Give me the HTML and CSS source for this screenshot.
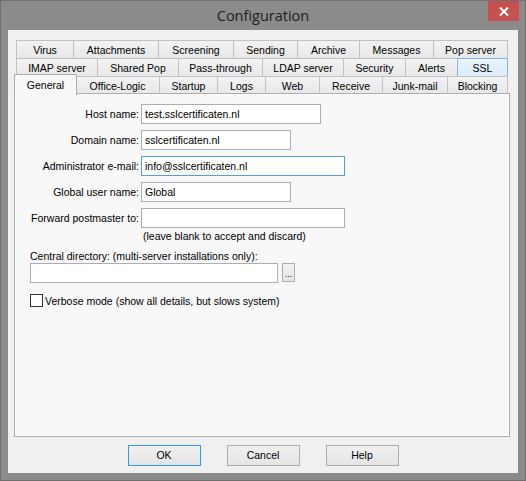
FILE: index.html
```html
<!DOCTYPE html>
<html>
<head>
<meta charset="utf-8">
<link rel="stylesheet" href="styles.css">
</head>
<body>
<div class="window">
  <div class="titlebar">
    <div class="title">Configuration</div>
    <div class="close">
      <svg width="10" height="9" viewBox="0 0 10 9"><path d="M1 0.5 L9 8.5 M9 0.5 L1 8.5" stroke="#fff" stroke-width="2"/></svg>
    </div>
  </div>
  <div class="client">
    <div class="tabs">
      <div class="tabrow row1">
        <div class="tab">Virus</div>
        <div class="tab">Attachments</div>
        <div class="tab">Screening</div>
        <div class="tab">Sending</div>
        <div class="tab">Archive</div>
        <div class="tab">Messages</div>
        <div class="tab">Pop server</div>
      </div>
      <div class="tabrow row2">
        <div class="tab">IMAP server</div>
        <div class="tab">Shared Pop</div>
        <div class="tab">Pass-through</div>
        <div class="tab">LDAP server</div>
        <div class="tab">Security</div>
        <div class="tab">Alerts</div>
        <div class="tab hover">SSL</div>
      </div>
      <div class="tabrow front">
        <div class="tab active">General</div>
        <div class="tab">Office-Logic</div>
        <div class="tab">Startup</div>
        <div class="tab">Logs</div>
        <div class="tab">Web</div>
        <div class="tab">Receive</div>
        <div class="tab">Junk-mail</div>
        <div class="tab">Blocking</div>
      </div>
    </div>
    <div class="panel">
      <div class="form">
        <label>Host name:</label>
        <div class="field w180">test.sslcertificaten.nl</div>
        <label>Domain name:</label>
        <div class="field w150">sslcertificaten.nl</div>
        <label>Administrator e-mail:</label>
        <div class="field w204 focus">info@sslcertificaten.nl</div>
        <label>Global user name:</label>
        <div class="field w150">Global</div>
        <label>Forward postmaster to:</label>
        <div class="field w204"></div>
      </div>
      <div class="note">(leave blank to accept and discard)</div>
      <div class="section">
        <div class="central-label">Central directory: (multi-server installations only):</div>
        <div class="dirrow">
          <div class="field w248"></div>
          <div class="browse">...</div>
        </div>
        <div class="check">
          <span class="box"></span>
          <span>Verbose mode (show all details, but slows system)</span>
        </div>
      </div>
    </div>
    <div class="buttons">
      <div class="btn default">OK</div>
      <div class="btn">Cancel</div>
      <div class="btn">Help</div>
    </div>
  </div>
</div>
</body>
</html>
```
FILE: styles.css
```css
body {
  margin: 0;
  font-family: "Liberation Sans", Arial, sans-serif;
  font-size: 10.5px;
  color: #000;
}

.window {
  width: 526px;
  height: 481px;
  box-sizing: border-box;
  border: 1px solid #707070;
  background: #8b8b8b;
  display: flex;
  flex-direction: column;
}

.titlebar {
  flex: none;
  height: 29px;
  display: grid;
  grid-template-columns: 1fr auto 1fr;
}

.title {
  grid-column: 2;
  font-family: "Open Sans", "Noto Sans", sans-serif;
  font-size: 14.5px;
  line-height: 29px;
  color: #1e1e1e;
}

.close {
  grid-column: 3;
  justify-self: end;
  align-self: start;
  width: 31px;
  height: 20px;
  margin-right: 6px;
  background: #c75050;
  display: flex;
  align-items: center;
  justify-content: center;
}

.close svg {
  display: block;
}

.client {
  flex: 1;
  margin: 0 7px 7px;
  background: #f0f0f0;
  padding: 10px 0 0 6px;
  box-sizing: border-box;
}

.tabs {
  width: 496px;
}

.tabrow {
  display: grid;
  margin: 0 2px;
  height: 18px;
}

.row1 {
  grid-template-columns: 57px 85px 75px 64px 62px 74px 75px;
}

.row2 {
  grid-template-columns: 81px 81px 84px 81px 62px 52px 51px;
}

.tabrow.front {
  height: 17px;
  grid-template-columns: 59px 84px 58px 48px 54px 63px 65px 61px;
}

.tab {
  box-sizing: border-box;
  height: 18px;
  padding: 1px 0 0;
  border: 1px solid #c2c2c2;
  border-bottom: none;
  border-right: none;
  background: linear-gradient(#f3f3f3, #e8e8e8);
  text-align: center;
  line-height: 16px;
  white-space: nowrap;
  overflow: hidden;
}

.front .tab {
  height: 17px;
  line-height: 16px;
}

.tab:last-child {
  border-right: 1px solid #c2c2c2;
}

.tab.hover {
  background: linear-gradient(#ecf4fc, #dcecfc);
  border: 1px solid #7eb4ea;
  border-bottom: none;
}

.front .tab.active {
  position: relative;
  z-index: 2;
  align-self: start;
  margin: -2px -2px 0;
  height: 21px;
  background: #f8f8f8;
  border: 1px solid #adadad;
  border-bottom: none;
  line-height: 18px;
}

.panel {
  width: 496px;
  height: 344px;
  box-sizing: border-box;
  border: 1px solid #adadad;
  background: #f8f8f8;
  box-shadow: inset 0 0 0 1px #fff;
  padding-top: 10px;
}

.form {
  display: grid;
  grid-template-columns: 124px auto;
  column-gap: 2px;
  row-gap: 6px;
  justify-items: start;
  align-items: center;
}

.form label {
  justify-self: end;
}

.field {
  height: 20px;
  box-sizing: border-box;
  border: 1px solid #abadb3;
  background: #fff;
  padding: 0 3px;
  line-height: 18px;
  white-space: nowrap;
}

.w150 { width: 150px; }
.w180 { width: 180px; }
.w204 { width: 204px; }
.w248 { width: 248px; }

.field.focus {
  border-color: #569de5;
}

.note {
  padding-left: 128px;
  margin-top: 1px;
  line-height: 14px;
}

.section {
  padding-left: 15px;
}

.central-label {
  margin-top: 7px;
  line-height: 13px;
}

.dirrow {
  display: flex;
  gap: 4px;
}

.browse {
  width: 13px;
  height: 19px;
  box-sizing: border-box;
  border: 1px solid #acacac;
  background: linear-gradient(#f2f2f2, #e4e4e4);
  font-size: 9px;
  line-height: 20px;
  text-align: center;
  overflow: hidden;
}

.check {
  margin-top: 11px;
  display: flex;
  align-items: center;
  gap: 2px;
}

.box {
  width: 13px;
  height: 13px;
  box-sizing: border-box;
  border: 1px solid #333;
  background: #fff;
}

.buttons {
  display: flex;
  justify-content: center;
  gap: 26px;
  margin-top: 8px;
  padding-right: 6px;
}

.btn {
  width: 73px;
  height: 21px;
  box-sizing: border-box;
  border: 1px solid #acacac;
  background: linear-gradient(#f0f0f0, #e5e5e5);
  text-align: center;
  line-height: 19px;
}

.btn.default {
  border-color: #3399ff;
}
```
